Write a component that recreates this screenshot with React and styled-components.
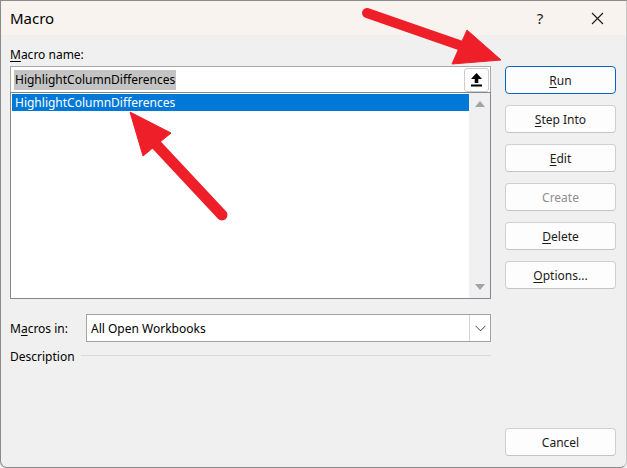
import React from "react";
import styled, { createGlobalStyle } from "styled-components";

const Global = createGlobalStyle`
  html, body { margin: 0; padding: 0; background: #f0f0f0; }
  body { font-family: "Noto Sans", "Open Sans", sans-serif; }
  * { box-sizing: border-box; }
`;

const Dialog = styled.div`
  position: relative;
  width: 627px;
  height: 468px;
  display: flex;
  flex-direction: column;
  background: #f0f0f0;
  border: 1px solid #8a8a8a;
  border-right-color: #c8c8c8;
  border-radius: 0 0 7px 7px;
  overflow: hidden;
  font-family: "Noto Sans", "Open Sans", sans-serif;
  font-size: 12px;
  color: #000;
`;

const TitleBar = styled.div`
  height: 34px;
  flex: none;
  display: flex;
  align-items: center;
  background: #f8f3ef;
  padding-left: 9px;
`;

const Title = styled.div`
  flex: 1;
  font-size: 15px;
`;

const TitleButton = styled.div`
  width: ${(p) => p.$w}px;
  height: 34px;
  display: flex;
  align-items: center;
  justify-content: center;
  font-size: 15px;
  color: #1a1a1a;
`;

const Body = styled.div`
  flex: 1;
  display: flex;
  gap: 14px;
  padding: 10px 10px 11px 9px;
`;

const LeftCol = styled.div`
  width: 481px;
  display: flex;
  flex-direction: column;
`;

const Label = styled.div`
  height: 21px;
  line-height: 20px;
  u { text-decoration: underline; text-underline-offset: 2px; }
`;

const NameInput = styled.div`
  height: 26px;
  display: flex;
  align-items: center;
  background: #fff;
  border: 1px solid #a8a8a8;
  border-bottom: none;
  padding: 0 1px 0 3px;
`;

const SelectedText = styled.span`
  flex: 1;
  span {
    background: #c4c4c4;
    padding: 1px 1px 2px 1px;
  }
`;

const UpButton = styled.div`
  width: 25px;
  height: 24px;
  border: 1px solid #cdcdcd;
  border-radius: 3px;
  background: #fff;
  display: flex;
  align-items: center;
  justify-content: center;
`;

const ListBox = styled.div`
  height: 207px;
  display: flex;
  background: #fff;
  border: 1px solid #828790;
  padding: 1px 0 1px 1px;
`;

const ListItems = styled.div`
  flex: 1;
`;

const ListItem = styled.div`
  height: 17px;
  line-height: 17px;
  padding-left: 3px;
  background: ${(p) => (p.$selected ? "#0078d7" : "transparent")};
  color: ${(p) => (p.$selected ? "#fff" : "#000")};
`;

const ScrollBar = styled.div`
  width: 21px;
  margin-top: -1px;
  margin-bottom: -1px;
  background: #f0f0f0;
  display: flex;
  flex-direction: column;
  justify-content: space-between;
  align-items: center;
  padding: 8px 0 8px;
`;

const Tri = styled.div`
  width: 0;
  height: 0;
  border-left: 5px solid transparent;
  border-right: 5px solid transparent;
  ${(p) => (p.$down ? "border-top: 6px solid #a3a3a3;" : "border-bottom: 6px solid #a3a3a3;")}
`;

const MacrosRow = styled.div`
  display: flex;
  align-items: center;
  margin-top: 15px;
  height: 28px;
`;

const RowLabel = styled.div`
  width: 76px;
  u { text-decoration: underline; text-underline-offset: 2px; }
`;

const Select = styled.div`
  flex: 1;
  height: 28px;
  display: flex;
  align-items: center;
  background: #fff;
  border: 1px solid #a3a3a3;
  padding-left: 4px;
`;

const SelectValue = styled.div`
  flex: 1;
`;

const SelectButton = styled.div`
  width: 21px;
  height: 26px;
  border-left: 1px solid #d4d4d4;
  display: flex;
  align-items: center;
  justify-content: center;
`;

const DescRow = styled.div`
  display: flex;
  align-items: center;
  gap: 6px;
  margin-top: 1px;
  height: 27px;
`;

const DescLine = styled.div`
  flex: 1;
  height: 1px;
  background: #d9d9d9;
  margin-top: -3px;
`;

const RightCol = styled.div`
  width: 111px;
  display: flex;
  flex-direction: column;
  gap: 11px;
  padding-top: 21px;
`;

const Button = styled.div`
  height: 28px;
  display: flex;
  align-items: center;
  justify-content: center;
  background: #fdfdfd;
  border: 1px solid ${(p) => (p.$default ? "#0067c0" : "#d0d0d0")};
  border-bottom-color: ${(p) => (p.$default ? "#0067c0" : "#c4c4c4")};
  border-radius: 4px;
  color: ${(p) => (p.$disabled ? "#8f8f8f" : "#1b1b1b")};
  ${(p) => (p.$bottom ? "margin-top: auto;" : "")}
  u { text-decoration: underline; text-underline-offset: 2px; }
`;

const Overlay = styled.svg`
  position: absolute;
  left: -1px;
  top: -1px;
  pointer-events: none;
`;

export default function App() {
  return (
    <>
      <Global />
      <Dialog>
        <TitleBar>
          <Title>Macro</Title>
          <TitleButton $w={30}>?</TitleButton>
          <TitleButton $w={20} />
          <TitleButton $w={44}>
            <svg width="13" height="13" viewBox="0 0 13 13">
              <path d="M1 1 L12 12 M12 1 L1 12" stroke="#1a1a1a" strokeWidth="1.1" fill="none" />
            </svg>
          </TitleButton>
          <TitleButton $w={7} />
        </TitleBar>
        <Body>
          <LeftCol>
            <Label>
              <u>M</u>acro name:
            </Label>
            <NameInput>
              <SelectedText>
                <span>HighlightColumnDifferences</span>
              </SelectedText>
              <UpButton>
                <svg width="13" height="15" viewBox="0 0 13 15">
                  <path d="M6.5 1 L12 7 L8.3 7 L8.3 11 L4.7 11 L4.7 7 L1 7 Z" fill="#000" />
                  <rect x="1" y="12.5" width="11" height="2" fill="#000" />
                </svg>
              </UpButton>
            </NameInput>
            <ListBox>
              <ListItems>
                <ListItem $selected>HighlightColumnDifferences</ListItem>
              </ListItems>
              <ScrollBar>
                <Tri />
                <Tri $down />
              </ScrollBar>
            </ListBox>
            <MacrosRow>
              <RowLabel>
                M<u>a</u>cros in:
              </RowLabel>
              <Select>
                <SelectValue>All Open Workbooks</SelectValue>
                <SelectButton>
                  <svg width="11" height="7" viewBox="0 0 11 7">
                    <path d="M0.5 0.8 L5.5 5.8 L10.5 0.8" stroke="#444" strokeWidth="1" fill="none" />
                  </svg>
                </SelectButton>
              </Select>
            </MacrosRow>
            <DescRow>
              <span>Description</span>
              <DescLine />
            </DescRow>
          </LeftCol>
          <RightCol>
            <Button $default>
              <span><u>R</u>un</span>
            </Button>
            <Button>
              <span><u>S</u>tep Into</span>
            </Button>
            <Button>
              <span><u>E</u>dit</span>
            </Button>
            <Button $disabled>Create</Button>
            <Button>
              <span><u>D</u>elete</span>
            </Button>
            <Button>
              <span><u>O</u>ptions...</span>
            </Button>
            <Button $bottom>Cancel</Button>
          </RightCol>
        </Body>
        <Overlay width="627" height="468" viewBox="0 0 627 468">
          <g fill="#ee1f29" stroke="#ee1f29">
            <line x1="367" y1="13" x2="462" y2="46" strokeWidth="10" strokeLinecap="round" />
            <polygon points="501,60 452,64 467,30" strokeWidth="1" strokeLinejoin="round" />
            <line x1="150" y1="138" x2="222" y2="215" strokeWidth="11" strokeLinecap="round" />
            <polygon points="130,112 171,133 143,156" strokeWidth="1" strokeLinejoin="round" />
          </g>
        </Overlay>
      </Dialog>
    </>
  );
}
